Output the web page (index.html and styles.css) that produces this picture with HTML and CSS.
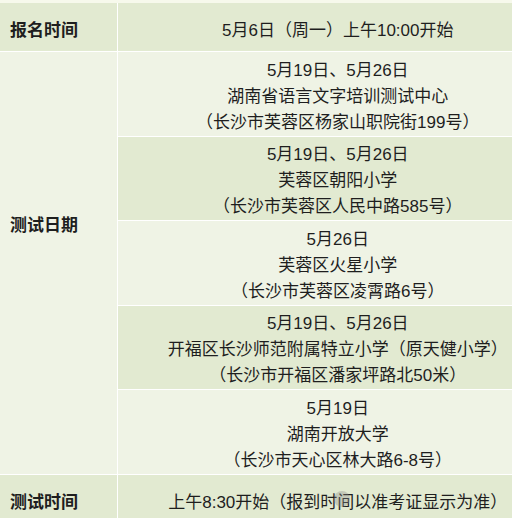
FILE: index.html
```html
<!DOCTYPE html>
<html lang="zh-CN">
<head>
<meta charset="utf-8">
<title>测试安排</title>
<link rel="stylesheet" href="styles.css">
</head>
<body>
<table class="schedule">
  <colgroup>
    <col class="col-label">
    <col class="col-value">
  </colgroup>
  <tr class="row-head">
    <td class="label">报名时间</td>
    <td class="value">5月6日（周一）上午10:00开始</td>
  </tr>
  <tr class="row-light">
    <td class="label label-span" rowspan="5"><div class="label-inner">测试日期</div></td>
    <td class="value">5月19日、5月26日<br>湖南省语言文字培训测试中心<br>（长沙市芙蓉区杨家山职院街199号）</td>
  </tr>
  <tr class="row-dark">
    <td class="value">5月19日、5月26日<br>芙蓉区朝阳小学<br>（长沙市芙蓉区人民中路585号）</td>
  </tr>
  <tr class="row-light">
    <td class="value">5月26日<br>芙蓉区火星小学<br>（长沙市芙蓉区凌霄路6号）</td>
  </tr>
  <tr class="row-dark">
    <td class="value">5月19日、5月26日<br>开福区长沙师范附属特立小学（原天健小学）<br>（长沙市开福区潘家坪路北50米）</td>
  </tr>
  <tr class="row-light">
    <td class="value">5月19日<br>湖南开放大学<br>（长沙市天心区林大路6-8号）</td>
  </tr>
  <tr class="row-head">
    <td class="label">测试时间</td>
    <td class="value">上午8:30开始（报到时间以准考证显示为准）</td>
  </tr>
</table>
<div class="watermark"><span class="wm-dot"></span></div>
</body>
</html>
```
FILE: styles.css
```css
html, body {
  margin: 0;
  padding: 0;
  overflow: hidden;
  background: #f7f9ec;
}
body {
  padding-top: 3px;
  font-family: "Liberation Sans", "Noto Sans CJK SC", sans-serif;
  font-size: 17px;
  color: #1e1e1e;
  position: relative;
  width: 512px;
  height: 518px;
}
.schedule {
  border-collapse: collapse;
  width: 559px;
  table-layout: fixed;
}
.col-label { width: 117px; }
.schedule td {
  border: 1px solid #ffffff;
  line-height: 26px;
  padding: 6px 8px 0;
}
.schedule tr:first-child td { border-top: none; }
.schedule td:first-child { border-left: none; }
.label {
  font-weight: bold;
  padding-left: 10px !important;
  text-align: left;
  background: #e2ead1;
}
.label-span {
  background: #eff3e5;
  vertical-align: top;
}
.label-inner {
  padding-top: 155px;
}
.value {
  text-align: center;
  vertical-align: middle;
}
.row-head td {
  background: #e2ead1;
  height: 41px;
  padding-top: 7px;
  padding-bottom: 0;
}
.row-light .value { background: #eff3e5; }
.row-dark .value {
  background: #e2ead1;
  padding-top: 5px;
}
.watermark {
  position: absolute;
  left: 334px;
  top: 491px;
  width: 20px;
  height: 20px;
  opacity: 0.35;
}
.wm-dot {
  display: block;
  width: 16px;
  height: 16px;
  border-radius: 50%;
  background: #8a8a8a;
}
```
